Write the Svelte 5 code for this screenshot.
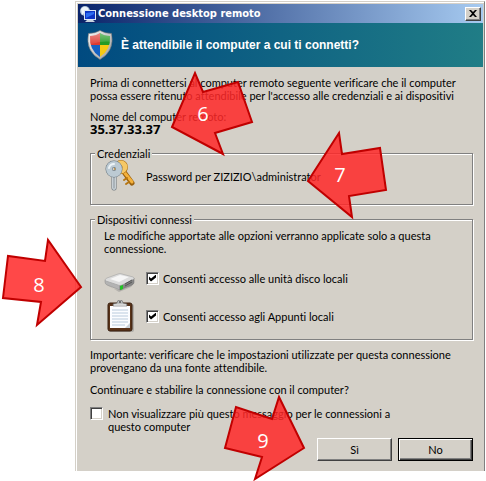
<script>
	let disks = $state(true);
	let clipboard = $state(true);
	let hide = $state(false);

	// step markers drawn over the dialog, numbers sit at x / y
	const steps = [
		{ n: 6, x: 203, y: 121, points: '172,127 195,73 203,92 238,82 252,122 215,133 223,154' },
		{ n: 7, x: 340, y: 182, points: '308,181 339,133 342,154 380,148 386,190 349,196 352,217' },
		{ n: 8, x: 39, y: 292, points: '81,287 48,240 45,261 8,256 3,298 41,302 37,325' },
		{ n: 9, x: 263, y: 448, points: '304,448 279,397 272,419 236,407 225,448 262,457 255,479' }
	];
</script>

<main>
	<section class="window">
		<header class="titlebar">
			<svg class="app-icon" viewBox="0 0 16 16" aria-hidden="true">
				<circle cx="5" cy="5" r="5" fill="#a9bed3" />
				<path d="M1 3q3-4 7-1l1 3-4 1-3 3Z" fill="#eef5fa" />
				<rect x="4.500" y="4.500" width="11" height="9" fill="#0b35c4" stroke="#dce8f4" />
				<path d="M6 12V7l8-1v2Z" fill="#2c6df0" />
				<path d="M7 14h6l2 2H5Z" fill="#c9d5df" />
			</svg>
			<h1>Connessione desktop remoto</h1>
			<button class="close" type="button" aria-label="Chiudi">
				<svg viewBox="0 0 8 7" aria-hidden="true">
					<path d="M0 0h2l2 2 2-2h2L5 3.500 8 7H6L4 5 2 7H0l3-3.500Z" />
				</svg>
			</button>
		</header>

		<div class="banner">
			<svg class="shield" viewBox="0 0 26 30" aria-hidden="true">
				<defs>
					<clipPath id="shield-clip">
						<path d="M13 3q4 3 10 3 1 14-10 21Q2 20 3 6q6 0 10-3Z" />
					</clipPath>
					<linearGradient id="rim" x2="1" y2="1">
						<stop stop-color="#f8f8f8" />
						<stop offset="1" stop-color="#9b9b9b" />
					</linearGradient>
					<linearGradient id="shine" x2="0" y2="1">
						<stop stop-color="#fff" stop-opacity=".5" />
						<stop offset="1" stop-color="#fff" stop-opacity="0" />
					</linearGradient>
				</defs>
				<path d="M13 .5q5 3 11.500 3Q28 21 13 29.500-2 21 1.500 3.500 8 3.500 13 .5Z" fill="url(#rim)" stroke="#777" stroke-width=".6" />
				<g clip-path="url(#shield-clip)">
					<path d="M0 0h13v15H0Z" fill="#dc3a32" />
					<path d="M13 0h13v15H13Z" fill="#249b25" />
					<path d="M0 15h13v15H0Z" fill="#1461c4" />
					<path d="M13 15h13v15H13Z" fill="#f6ca13" />
					<path d="M0 0h26v12Q13 10 0 16Z" fill="url(#shine)" />
				</g>
			</svg>
			<h2>È attendibile il computer a cui ti connetti?</h2>
		</div>

		<div class="content">
			<p>Prima di connettersi al computer remoto seguente verificare che il computer<br />possa essere ritenuto attendibile per l'accesso alle credenziali e ai dispositivi</p>
			<p class="host">Nome del computer remoto:<br /><strong>35.37.33.37</strong></p>

			<fieldset class="credentials">
				<legend>Credenziali</legend>
				<svg class="icon" viewBox="0 0 32 32" aria-hidden="true">
					<g fill="none" stroke-linecap="round">
						<path d="m20 12 8 11" stroke="#99600f" stroke-width="5" />
						<path d="m20 12 8 10" stroke="#f4b13b" stroke-width="3" />
						<path d="m25 22-3 2m1-6-3 2" stroke="#b6750f" stroke-width="2" />
						<circle cx="17" cy="7" r="4" stroke="#ad7013" stroke-width="6" />
						<circle cx="17" cy="7" r="4" stroke="#f6c866" stroke-width="5" />
						<path d="M10 13v15" stroke="#667079" stroke-width="5" />
						<path d="M10 13v15" stroke="#c8d0d5" stroke-width="4" />
						<path d="M10 14v14" stroke="#8b959c" />
						<circle cx="10" cy="9" r="5" stroke="#66737d" stroke-width="7" />
						<circle cx="10" cy="9" r="5" stroke="#bccad3" stroke-width="6" />
						<path d="M5 8q1-4 5-4" stroke="#edf3f6" stroke-width="2" />
					</g>
				</svg>
				<span>Password per ZIZIZIO\administrator</span>
			</fieldset>

			<fieldset class="devices">
				<legend>Dispositivi connessi</legend>
				<p>Le modifiche apportate alle opzioni verranno applicate solo a questa<br />connessione.</p>
				<div class="device">
					<svg class="icon" viewBox="0 0 32 32" aria-hidden="true">
						<path d="M2 22q14 12 29-2l-4 5-12 5Z" fill="#777" opacity=".35" />
						<path d="M1 18 16 23v5L3 23q-2-1-2-3Z" fill="#b3b3b3" stroke="#888" stroke-width=".5" />
						<path d="m16 23 14-7v4q0 2-2 3l-12 5Z" fill="#858585" stroke="#6d6d6d" stroke-width=".5" />
						<path d="M1 18q0-1 2-2l11-4q2-1 4 0l11 3q2 1 1 2l-12 6q-2 1-4 0L2 19Z" fill="#dcdcdc" stroke="#999" stroke-width=".5" />
						<path d="m6 17 10-4 9 2-10 5Z" fill="#f6f6f6" />
						<path d="m16 24 3-1v4l-3 1Z" fill="#22c425" />
						<path d="m21 22 7-4m-7 6 7-4" stroke="#555" />
					</svg>
					<label><input type="checkbox" bind:checked={disks} />Consenti accesso alle unità disco locali</label>
				</div>
				<div class="device">
					<svg class="icon" viewBox="0 0 32 32" aria-hidden="true">
						<rect x="5" y="4" width="25" height="28" rx="2" fill="#777" opacity=".4" />
						<rect x="4" y="3" width="24" height="28" rx="2" fill="#593319" stroke="#3b2010" />
						<path d="M6 6h20v22H6Z" fill="#fbfdff" />
						<path d="M8 10h16M8 13h16M8 16h16M8 19h16M8 22h16M8 25h13" stroke="#b9cbdc" />
						<path d="m21 28 5-5v5Z" fill="#c8d0d6" />
						<path d="M9 6V4l4-1q0-3 3-3t3 3l4 1v2Z" fill="#b9bcbc" stroke="#666" stroke-width=".6" />
						<circle cx="16" cy="2" r="1" fill="#555" />
						<path d="M10 5h12" stroke="#f4f4f4" />
					</svg>
					<label><input type="checkbox" bind:checked={clipboard} />Consenti accesso agli Appunti locali</label>
				</div>
			</fieldset>

			<p>Importante: verificare che le impostazioni utilizzate per questa connessione<br />provengano da una fonte attendibile.</p>
			<p class="question">Continuare e stabilire la connessione con il computer?</p>
			<label class="hide">
				<input type="checkbox" bind:checked={hide} />
				<span>Non visualizzare più questo messaggio per le connessioni a<br />questo computer</span>
			</label>
			<div class="actions">
				<button class="action" type="button">Sì</button>
				<button class="action default" type="button">No</button>
			</div>
		</div>
	</section>

	<svg class="steps" width="486" height="481" aria-hidden="true">
		{#each steps as step}
			<polygon points={step.points} />
			<text x={step.x} y={step.y}>{step.n}</text>
		{/each}
	</svg>
</main>

<style>
	:global(body) {
		margin: 0;
		background: #fff;
	}
	main {
		position: relative;
		padding: 1px 1px 10px 75px;
		font: 11px/13px Lato, "Liberation Sans", sans-serif;
		font-variant-ligatures: none;
		color: #000;
	}
	h1, h2, p { margin: 0; }
	.window {
		background: #d4d0c8;
		border: 1px solid #d4d0c8;
		border-right-color: #808080;
		border-bottom: 0;
		box-shadow: inset 1px 1px #fff;
		padding: 2px 1px 10px 2px;
	}
	.titlebar {
		display: flex;
		align-items: center;
		height: 19px;
		padding: 0 2px;
		background: linear-gradient(90deg, #0a246a, #a6caf0);
	}
	.app-icon {
		width: 16px;
		height: 16px;
		margin-right: 2px;
	}
	h1 {
		flex: 1;
		color: #fff;
		font: bold 11px/18px "DejaVu Sans Condensed", "Open Sans", sans-serif;
	}
	button {
		font: inherit;
		color: #000;
		background: #d4d0c8;
		border: 1px solid;
		border-color: #fff #404040 #404040 #fff;
		border-radius: 0;
		box-shadow: inset -1px -1px #808080;
	}
	.close {
		display: grid;
		place-items: center;
		width: 16px;
		height: 14px;
		padding: 0 1px 1px 0;
	}
	.close svg {
		width: 8px;
		height: 7px;
	}
	.banner {
		display: flex;
		align-items: center;
		height: 44px;
		padding-left: 9px;
		gap: 8px;
		background: linear-gradient(90deg, #004a80, #207d86);
	}
	.shield {
		width: 26px;
		height: 30px;
	}
	h2 {
		color: #fff;
		font: bold 12px/16px "Liberation Sans", Arial, sans-serif;
	}
	.content {
		padding: 9px 10px 0 12px;
	}
	.host { margin-top: 8px; }
	strong {
		font: bold 13px/13px "Noto Sans", sans-serif;
	}
	fieldset {
		min-width: 0;
		margin: 0;
		border: 1px solid #808080;
		box-shadow: 1px 1px #fff, inset 1px 1px #fff;
	}
	legend {
		height: 13px;
		padding: 0 2px;
		margin-left: -9px;
		background: #d4d0c8;
	}
	.icon {
		flex: none;
		width: 32px;
		height: 32px;
	}
	.credentials {
		display: flex;
		align-items: center;
		gap: 10px;
		margin-top: 11px;
		padding: 0 0 12px 13px;
	}
	.devices {
		margin: 8px 0;
		padding: 3px 13px 4px;
	}
	.device {
		display: flex;
		align-items: center;
		gap: 10px;
		height: 38px;
	}
	.devices p { margin-bottom: 4px; }
	.device label {
		display: flex;
		align-items: center;
		gap: 4px;
	}
	input {
		appearance: none;
		flex: none;
		display: grid;
		place-items: center;
		width: 13px;
		height: 13px;
		margin: 0;
		background: #fff;
		border: 1px solid;
		border-color: #808080 #fff #fff #808080;
		box-shadow: inset 1px 1px #404040, inset -1px -1px #d4d0c8;
	}
	input:checked::before {
		content: "";
		width: 7px;
		height: 7px;
		background: #000;
		clip-path: polygon(0 29%, 29% 57%, 100% 0, 100% 43%, 29% 100%, 0 72%);
	}
	.question { margin-top: 9px; }
	.hide {
		display: flex;
		gap: 5px;
		margin-top: 11px;
	}
	.actions {
		display: flex;
		justify-content: flex-end;
		gap: 6px;
		margin-top: 5px;
	}
	.action {
		width: 75px;
		height: 23px;
		padding: 0;
	}
	.default {
		border-color: #000;
		box-shadow: inset 1px 1px #fff, inset -1px -1px #404040, inset -2px -2px #808080;
	}
	.steps {
		position: absolute;
		top: 0;
		left: 0;
		pointer-events: none;
	}
	polygon {
		fill: #ff2828;
		fill-opacity: .85;
		stroke: #c00000;
		stroke-width: 2px;
	}
	text {
		fill: #fff;
		font: 20px "Open Sans", sans-serif;
		text-anchor: middle;
	}
</style>
